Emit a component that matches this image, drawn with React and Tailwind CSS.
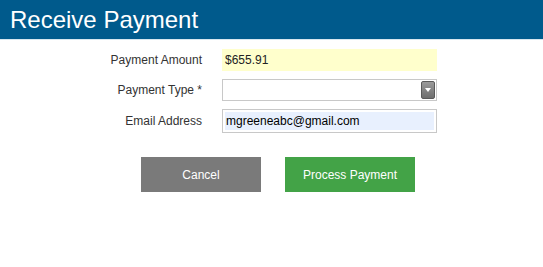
export default function App() {
    return (
        <div className="w-[543px] h-[267px] bg-white" style={{fontFamily: '"Liberation Sans", Arial, sans-serif'}}>
            <div className="h-[40px] bg-[#005a8c] border-b border-[#d6e6ef] flex items-center pl-[10px]">
                <h1 className="text-[24px] text-white leading-none">Receive Payment</h1>
            </div>

            <div className="flex flex-col gap-[8px] pt-[9px]">
                <div className="flex items-center">
                    <label className="w-[202px] text-right text-[12px] text-[#333]">Payment Amount</label>
                    <div className="ml-[20px] w-[215px] h-[22px] bg-[#ffffcc] flex items-center pl-[3px] text-[12px] text-[#222]">$655.91</div>
                </div>
                <div className="flex items-center">
                    <label className="w-[202px] text-right text-[12px] text-[#333]">Payment Type *</label>
                    <div className="ml-[20px] w-[215px] h-[22px] border border-[#c8c8c8] bg-white flex items-center justify-end pr-[1px]">
                        <div className="w-[14px] h-[18px] rounded-[2px] bg-gradient-to-b from-[#9a9a9a] to-[#6e6e6e] border border-[#5a5a5a] flex items-center justify-center">
                            <svg width="6" height="4" viewBox="0 0 6 4"><path d="M0 0h6L3 4z" fill="#fff"/></svg>
                        </div>
                    </div>
                </div>
                <div className="flex items-center">
                    <label className="w-[202px] text-right text-[12px] text-[#333]">Email Address</label>
                    <div className="ml-[20px] w-[215px] h-[24px] border border-[#c8c8c8] bg-white p-[2px]">
                        <div className="h-full bg-[#e8f0fe] flex items-center pl-[1px] text-[12px] text-black">mgreeneabc@gmail.com</div>
                    </div>
                </div>
            </div>

            <div className="flex gap-[24px] pl-[141px] pt-[24px]">
                <button className="w-[120px] h-[35px] bg-[#7a7a7a] text-white text-[12px]">Cancel</button>
                <button className="w-[130px] h-[35px] bg-[#43a347] text-white text-[12px]">Process Payment</button>
            </div>
        </div>
    )
}
